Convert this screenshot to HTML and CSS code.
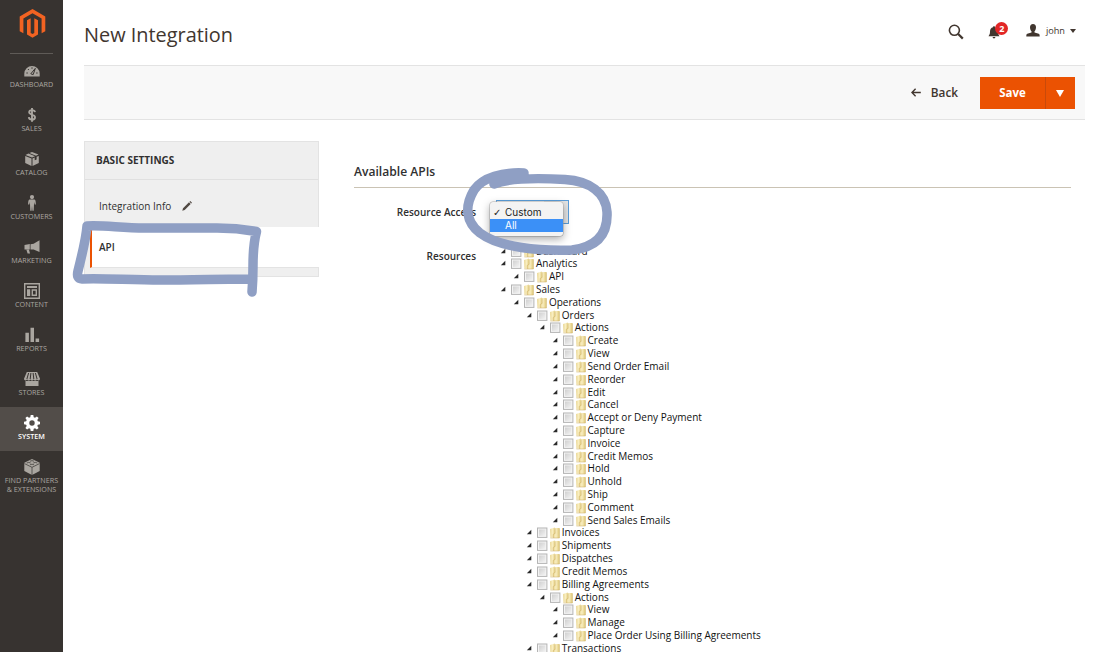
FILE: index.html
```html
<!DOCTYPE html>
<html lang="en">
<head>
<meta charset="utf-8">
<title>New Integration</title>
<link rel="stylesheet" href="styles.css">
</head>
<body>
<svg class="defs" aria-hidden="true">
  <defs>
    <linearGradient id="gold" x1="0" x2="1" y1="0" y2="0"><stop offset="0" stop-color="#ead795"/><stop offset=".45" stop-color="#f9eec0"/><stop offset="1" stop-color="#dfc878"/></linearGradient>
    <linearGradient id="grey" x1="0" x2="1" y1="0" y2="1"><stop offset="0" stop-color="#d0d0d0"/><stop offset="1" stop-color="#f2f2f2"/></linearGradient>
    <symbol id="node" viewBox="0 0 36 13">
      <path d="M.8 8.300 L5.300 3.800 V8.300Z" fill="#2a2a2a"/>
      <rect x="11.500" y="2" width="9.400" height="9.400" fill="#f4f4f4" stroke="#b4b4b4"/>
      <rect x="13" y="3.500" width="6.400" height="6.400" fill="url(#grey)"/>
      <path d="M24 3 L28.800 1.400 L29.600 10.800 L24.400 11.800Z" fill="url(#gold)"/>
      <path d="M29.200 2 H33.400 V12 H27.200 V8.400 L29.200 7.400Z" fill="url(#gold)"/>
      <path d="M29.200 2.400V7.400L27.200 8.400V12M33.400 2.400V12H24.400" fill="none" stroke="#c9ab5c" stroke-width=".5"/>
    </symbol>
  </defs>
</svg>
<div class="app">
  <nav class="sidebar">
    <svg class="logo" viewBox="0 0 27 30"><path fill="#f26322" d="M13.5 0 26.3 7.4V22.2L22.6 24.3V9.5L13.5 4.3 4.4 9.5V24.3L.7 22.2V7.4ZM15.3 9.2 19 11.3V25.6L13.5 28.8 8 25.6V11.3L11.7 9.2V24L13.5 25.1 15.3 24Z"/></svg>
    <a class="item"><svg viewBox="0 0 16 14"><path d="M.3 12.6V9.6a7.7 7.7 0 0 1 15.4 0v3Z"/><path class="cut" d="M8 3.3v1.5M3.9 5l1 1M2.4 9h1.4M12.2 9h1.4M6.8 9.8 11.3 4.4 9.2 10.6Z"/></svg><span>Dashboard</span></a>
    <a class="item"><svg viewBox="0 0 16 14"><path class="line" d="M11 4.1C10.7 2.7 9.6 2.1 8 2.1S5.200 2.800 5.200 4.300C5.200 7.200 11 5.900 11 9.200c0 1.600-1.300 2.400-3 2.400s-3-.8-3.200-2.400M8 .1v13.600"/></svg><span>Sales</span></a>
    <a class="item"><svg viewBox="0 0 16 14"><path d="M8 0 14.500 2.600 12 3.800 5.400 1.100ZM4.400 1.500 11 4.300 8 5.600 1.500 2.900ZM1.200 3.900 7.500 6.600V14L1.200 11.100ZM14.800 3.900V11.100L8.500 14V6.600L10.700 5.600V8.300L12.600 7.400V4.800Z"/></svg><span>Catalog</span></a>
    <a class="item"><svg class="tall" viewBox="0 0 16 16"><circle cx="8" cy="2.100" r="2.100"/><path d="M5.800 4.600h4.400c1 0 1.700 1 1.700 5h-1.200l-.6-2.700-.4 8.900H8.400L8 10.800l-.4 5H6.300l-.4-8.900-.6 2.700H4.100c0-4 .7-5 1.700-5Z"/></svg><span>Customers</span></a>
    <a class="item"><svg viewBox="0 0 16 14"><path d="M15.500.3V12L9.600 9.500H6.500V4.200L9.600 3.700ZM.5 5 5.800 4.100V9.400H.5ZM2.400 9.800H5l1 3.800H3.600Z"/></svg><span>Marketing</span></a>
    <a class="item"><svg class="tall" viewBox="0 0 16 16"><path fill-rule="evenodd" d="M0 0h16v16H0ZM1.400 1.400v13.200h13.200V1.400ZM3 3h10v2H3ZM3 6.300h3.200V13H3ZM7.600 6.300H13V13H7.600ZM9 7.700v3.900h2.600V7.700Z"/></svg><span>Content</span></a>
    <a class="item"><svg class="tall" viewBox="0 0 16 16"><path d="M1.400 5.800h3.500V15H1.400ZM6.500.8H10V15H6.500ZM11.600 11.500h3.500V15h-3.500Z"/></svg><span>Reports</span></a>
    <a class="item"><svg viewBox="0 0 16 14"><path d="M2.800 0h10.400L16 6.800c0 2-2.700 2.100-3.100.5-.3 1.600-2.900 1.600-3.200 0-.3 1.600-3.100 1.600-3.400 0-.3 1.600-2.900 1.600-3.200 0C2.700 8.900 0 8.800 0 6.800ZM1.500 9.100h13V14h-13Z"/><path class="cut" d="M4.600 1 2.900 7M6.900 1 6.200 7M9.100 1 9.800 7M11.400 1 13.100 7"/></svg><span>Stores</span></a>
    <a class="item active"><svg class="tall" viewBox="0 0 16 16"><path fill-rule="evenodd" d="M6.700 0h2.600l.4 2.200 1.300.6L12.900 1.400 14.600 3.100 13.300 5l.5 1.300 2.200.4v2.600l-2.200.4-.5 1.300 1.300 1.900-1.700 1.700L11 13.200l-1.300.6L9.300 16H6.700l-.4-2.200L5 13.200l-1.900 1.400-1.700-1.700L2.700 11l-.5-1.300L0 9.300V6.700l2.200-.4L2.700 5 1.400 3.100 3.100 1.400 5 2.800l1.300-.6ZM8 5.300a2.700 2.700 0 1 0 0 5.400 2.700 2.700 0 0 0 0-5.400Z"/></svg><span>System</span></a>
    <a class="item"><svg class="tall" viewBox="0 0 16 16"><path d="M8 0 15.700 3.800V12L8 16 .3 12V3.800Z"/><path class="cut thin" d="M.5 4.600 8 8.300l7.500-3.700M8 8.300V16M6 2.200q2-1.100 4 0M2.700 4q2-1.200 4 0M9.300 4q2-1.200 4 0M6 5.800q2-1.200 4 0"/></svg><span>Find Partners<br>&amp; Extensions</span></a>
  </nav>
  <main class="main">
    <header class="top">
      <h1>New Integration</h1>
      <svg class="search" viewBox="0 0 16 16"><circle cx="6.400" cy="6.300" r="5"/><path d="m10.200 10 4.600 4.600"/></svg>
      <div class="alerts">
        <svg viewBox="0 0 12 13"><path d="M6 .3c.7 0 1 .4 1 .9 2 .4 3 2 3 4.300 0 2.500.6 3.600 1.500 4.700H.5C1.400 9.100 2 8 2 5.500c0-2.300 1-3.900 3-4.300 0-.5.300-.9 1-.9ZM4.600 11h2.800a1.400 1.400 0 0 1-2.800 0Z"/></svg>
        <b class="badge">2</b>
      </div>
      <svg class="user" viewBox="0 0 14 13"><path d="M7 0c2 0 3 1.300 3 3.200S9.200 6.600 8.500 7.300v1.200l4.200 1.300c.7.300 1 .9 1 2.700H.3c0-1.800.3-2.400 1-2.700l4.200-1.300V7.300C4.800 6.600 4 5.100 4 3.200S5 0 7 0Z"/></svg>
      <span class="name">john</span><i class="caret"></i>
    </header>
    <div class="actions">
      <svg class="arrow" viewBox="0 0 10 9"><path d="M9.800 4.500H1M4.600.8.900 4.500l3.700 3.700"/></svg>
      <span class="back">Back</span>
      <div class="save"><span>Save</span><span class="more"><i></i></span></div>
    </div>
    <div class="content">
      <aside class="panel">
        <h2>BASIC SETTINGS</h2>
        <div class="tab">Integration Info<svg viewBox="0 0 10 10"><path d="M.3 9.700 1 7.300 7 1.300 8.700 3 2.700 9ZM7.500.8 8.300 0 10 1.700 9.200 2.500Z"/></svg></div>
        <div class="tab current">API</div>
      </aside>
      <section class="apis">
        <h3>Available APIs</h3>
        <div class="field"><label>Resource Access</label>
          <div class="select"><div class="menu"><div><em>✓</em>Custom</div><div class="on"><em></em>All</div></div></div>
        </div>
        <div class="field resources"><label>Resources</label>
          <ul class="tree">
            <li><p><svg><use href="#node"/></svg>Dashboard</p></li>
            <li><p><svg><use href="#node"/></svg>Analytics</p>
              <ul><li><p><svg><use href="#node"/></svg>API</p></li></ul></li>
            <li><p><svg><use href="#node"/></svg>Sales</p>
              <ul><li><p><svg><use href="#node"/></svg>Operations</p>
                <ul>
                  <li><p><svg><use href="#node"/></svg>Orders</p>
                    <ul><li><p><svg><use href="#node"/></svg>Actions</p>
                      <ul>
                        <li><p><svg><use href="#node"/></svg>Create</p></li>
                        <li><p><svg><use href="#node"/></svg>View</p></li>
                        <li><p><svg><use href="#node"/></svg>Send Order Email</p></li>
                        <li><p><svg><use href="#node"/></svg>Reorder</p></li>
                        <li><p><svg><use href="#node"/></svg>Edit</p></li>
                        <li><p><svg><use href="#node"/></svg>Cancel</p></li>
                        <li><p><svg><use href="#node"/></svg>Accept or Deny Payment</p></li>
                        <li><p><svg><use href="#node"/></svg>Capture</p></li>
                        <li><p><svg><use href="#node"/></svg>Invoice</p></li>
                        <li><p><svg><use href="#node"/></svg>Credit Memos</p></li>
                        <li><p><svg><use href="#node"/></svg>Hold</p></li>
                        <li><p><svg><use href="#node"/></svg>Unhold</p></li>
                        <li><p><svg><use href="#node"/></svg>Ship</p></li>
                        <li><p><svg><use href="#node"/></svg>Comment</p></li>
                        <li><p><svg><use href="#node"/></svg>Send Sales Emails</p></li>
                      </ul></li></ul></li>
                  <li><p><svg><use href="#node"/></svg>Invoices</p></li>
                  <li><p><svg><use href="#node"/></svg>Shipments</p></li>
                  <li><p><svg><use href="#node"/></svg>Dispatches</p></li>
                  <li><p><svg><use href="#node"/></svg>Credit Memos</p></li>
                  <li><p><svg><use href="#node"/></svg>Billing Agreements</p>
                    <ul><li><p><svg><use href="#node"/></svg>Actions</p>
                      <ul>
                        <li><p><svg><use href="#node"/></svg>View</p></li>
                        <li><p><svg><use href="#node"/></svg>Manage</p></li>
                        <li><p><svg><use href="#node"/></svg>Place Order Using Billing Agreements</p></li>
                      </ul></li></ul></li>
                  <li><p><svg><use href="#node"/></svg>Transactions</p></li>
                </ul></li></ul></li>
          </ul>
        </div>
      </section>
    </div>
  </main>
  <svg class="marks" viewBox="0 0 1100 652">
    <path d="M87 226C105 225 120 228 145 228H217C235 228 248 230 256.500 231.500C253 245 253 255 253 266Q253 280 252 292M252 279C225 279 190 280 160 280C130 280 100 278 82 279Q76 279 78 271C82 254 86 240 87 226"/>
    <path d="M524 173C503 172 483 177 474 190C464 207 466 222 480 233C500 248 540 251 572 250C598 247 608 233 607 212C606 193 590 181 565 179.500C540 178 510 178 494 184"/>
  </svg>
</div>
</body>
</html>
```
FILE: styles.css
```css
* { box-sizing: border-box; margin: 0; padding: 0; }
body { font-family: "Open Sans", sans-serif; color: #303030; background: #fff; overflow: hidden; }
.defs { position: absolute; width: 0; height: 0; }
.app { position: relative; display: flex; width: 1100px; height: 652px; overflow: hidden; }

.sidebar { width: 63px; flex: none; background: #373330; display: flex; flex-direction: column; align-items: center; }
.logo { width: 27px; height: 30px; margin: 9px 0 14px 1px; flex: none; }
.item { position: relative; width: 63px; height: 44px; padding-top: 8px; flex: none; display: flex; flex-direction: column; align-items: center; color: #aaa6a0; }
.item:first-of-type { height: 46px; padding-top: 10px; }
.item:first-of-type::before { content: ""; position: absolute; top: 0; left: 10px; width: 43px; height: 1px; background: #5f5b57; }
.item svg { width: 16px; height: 14px; margin: 1px 0; fill: currentColor; flex: none; }
.item svg.tall { height: 16px; margin: 0; }
.item span { margin-top: 1px; font-size: 7.200px; line-height: 9px; text-transform: uppercase; text-align: center; white-space: nowrap; }
.item .cut { fill: none; stroke: #373330; stroke-width: 1; }
.item .thin { stroke-width: .7; }
.item .line { fill: none; stroke: currentColor; stroke-width: 1.900; }
.item.active { background: #524d49; color: #fff; font-weight: 600; }

.main { flex: 1; padding-left: 21px; }
.top { height: 65px; display: flex; align-items: center; padding-right: 24px; }
h1 { flex: 1; font-size: 19.900px; font-weight: 400; line-height: 28px; padding-top: 4px; color: #41362f; }
.search { width: 16px; height: 16px; margin: 0 24px 2px 0; fill: none; stroke: #41362f; stroke-width: 1.600; }
.search path { stroke-width: 2.200; }
.alerts { position: relative; width: 12px; height: 13px; margin: 0 26px 1px 0; }
.alerts svg { display: block; width: 12px; height: 13px; fill: #41362f; }
.badge { position: absolute; left: 7.500px; top: -4px; width: 13px; height: 13px; border-radius: 7px; background: #e22626; color: #fff; font-size: 9px; line-height: 13px; text-align: center; }
.user { width: 14px; height: 13px; fill: #41362f; margin: 0 6px 4px 0; }
.name { font-size: 9.200px; color: #41362f; margin-bottom: 4px; }
.caret { margin: 0 0 3px 5px; border: 3px solid transparent; border-top: 4px solid #41362f; border-bottom: 0; }

.actions { width: 1001px; height: 55px; background: #f8f8f8; border: solid #e3e3e3; border-width: 1px 0; display: flex; align-items: center; justify-content: flex-end; padding-right: 10px; color: #41362f; font-weight: 600; font-size: 11.800px; }
.arrow { width: 10px; height: 9px; margin-right: 10px; fill: none; stroke: currentColor; stroke-width: 1.400; }
.back { margin: 0 22px 2px 0; }
.save { width: 95px; height: 32px; background: #eb5202; color: #fff; font-weight: 700; font-size: 11.500px; display: flex; line-height: 31px; text-align: center; }
.save > span { flex: 1; }
.save .more { flex: 0 0 30px; border-left: 1px solid #c94a0a; display: flex; align-items: center; justify-content: center; }
.more i { border: 4px solid transparent; border-top: 7px solid #fff; border-bottom: 0; margin: 2px 1px 0 0; }

.content { display: flex; align-items: flex-start; padding-top: 21px; }
.panel { width: 235px; height: 136px; background: #efefef; border: 1px solid #e3e3e3; font-size: 10px; }
.panel h2 { height: 38px; line-height: 37px; padding-left: 11px; font-size: 10px; font-weight: 700; border-bottom: 1px solid #e0e0e0; }
.tab { height: 47px; padding: 14px 0 0 14px; line-height: 24px; display: flex; }
.tab svg { width: 10px; height: 10px; margin: 7px 0 0 11px; fill: #514943; }
.tab.current { height: 41px; margin: 0 -1px 0 5px; padding: 0 0 0 7px; line-height: 40px; background: #fff; border-left: 2px solid #eb5202; font-weight: 600; border-bottom: 1px solid #e3e3e3; }

.apis { width: 717px; margin-left: 35px; }
h3 { height: 47px; padding-top: 19px; line-height: 24px; font-size: 12.100px; font-weight: 600; border-bottom: 1px solid #cac3b4; }
.field { display: flex; align-items: flex-start; }
.field label { width: 122px; margin-right: 20px; padding-top: 12px; font-size: 10px; line-height: 24px; font-weight: 600; text-align: right; white-space: nowrap; }
.resources label { padding-top: 0; }
.select { position: relative; width: 73px; height: 24px; margin: 12px 0 20px; border: 1px solid #5b9dd9; background: linear-gradient(90deg, #fff 66%, #e3e3e3 66%); }
.menu { position: absolute; left: -7px; top: 1px; width: 73px; height: 34px; padding-top: 4px; border-radius: 3px; background: #f3f3f3; box-shadow: 0 3px 9px rgba(0,0,0,.35), 0 0 0 .5px #bbb; font: 10px/13px Inter, sans-serif; color: #222; }
.menu div { display: flex; height: 13px; }
.menu em { width: 15px; padding-left: 3px; font: 10px/13px "DejaVu Sans", sans-serif; }
.menu .on { background: #3b90f7; color: #fff; }

ul { list-style: none; }
.tree { margin: .6px 0 0 4px; font-size: 10px; color: #111; }
.tree ul { padding-left: 12.900px; }
.tree p { display: flex; height: 12.820px; line-height: 12.820px; white-space: nowrap; }
.tree p svg { width: 36px; height: 13px; flex: none; }

.marks { position: absolute; left: 0; top: 0; width: 1100px; height: 652px; pointer-events: none; fill: none; stroke: #8f9fc4; stroke-width: 9.500; stroke-linecap: round; stroke-linejoin: round; }
```
